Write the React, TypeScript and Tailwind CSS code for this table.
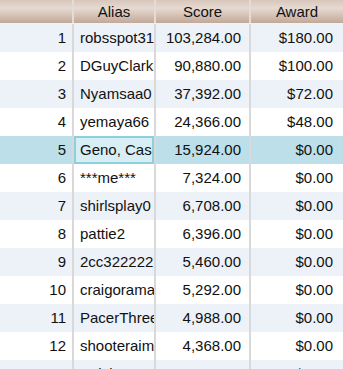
import { type ReactElement } from 'react';

type Row = { rank: number; alias: string; score: string; award: string };

const rows: Row[] = [
  { rank: 1, alias: 'robsspot31', score: '103,284.00', award: '$180.00' },
  { rank: 2, alias: 'DGuyClark', score: '90,880.00', award: '$100.00' },
  { rank: 3, alias: 'Nyamsaa0', score: '37,392.00', award: '$72.00' },
  { rank: 4, alias: 'yemaya66', score: '24,366.00', award: '$48.00' },
  { rank: 5, alias: 'Geno, Casey', score: '15,924.00', award: '$0.00' },
  { rank: 6, alias: '***me***', score: '7,324.00', award: '$0.00' },
  { rank: 7, alias: 'shirlsplay0', score: '6,708.00', award: '$0.00' },
  { rank: 8, alias: 'pattie2', score: '6,396.00', award: '$0.00' },
  { rank: 9, alias: '2cc3222222', score: '5,460.00', award: '$0.00' },
  { rank: 10, alias: 'craigorama', score: '5,292.00', award: '$0.00' },
  { rank: 11, alias: 'PacerThree', score: '4,988.00', award: '$0.00' },
  { rank: 12, alias: 'shooteraim', score: '4,368.00', award: '$0.00' },
  { rank: 13, alias: 'rudyk1234', score: '4,060.00', award: '$0.00' },
];

const SELECTED = 5;

export default function App(): ReactElement {
  return (
    <div
      className="w-[343px] h-[369px] overflow-hidden bg-white text-[15px] text-[#111]"
      style={{ fontFamily: '"Liberation Sans", Arial, sans-serif' }}
    >
      {/* ヘッダー */}
      <div className="grid grid-cols-[74px_82px_95px_92px] h-[24px] border-b border-[#f2f2f2] bg-[linear-gradient(#d8c6ba,#e6dad2_35%,#c2a898)]">
        <div className="border-r-2 border-[#e3dcd7]" />
        <div className="border-r-2 border-[#e3dcd7] flex items-center justify-center leading-none">Alias</div>
        <div className="border-r-2 border-[#e3dcd7] flex items-center justify-center leading-none">Score</div>
        <div className="flex items-center justify-center leading-none">Award</div>
      </div>

      {rows.map((r) => {
        const selected = r.rank === SELECTED;
        const bg = selected ? 'bg-[#bcdfe9]' : r.rank % 2 === 1 ? 'bg-[#edf2f9]' : 'bg-white';
        return (
          <div key={r.rank} className={`grid grid-cols-[74px_82px_95px_92px] h-[28px] ${bg}`}>
            <div className="border-r-2 border-[#d9d9d9] flex items-center justify-end pr-[6px]">{r.rank}</div>
            <div className="border-r-2 border-[#d9d9d9] overflow-hidden">
              <div
                className={
                  selected
                    ? 'h-full flex items-center pl-[4px] whitespace-nowrap overflow-hidden bg-[#d8eef5] border-2 border-[#8ccfdd]'
                    : 'h-full flex items-center pl-[6px] whitespace-nowrap overflow-hidden'
                }
              >
                {r.alias}
              </div>
            </div>
            <div className="border-r-2 border-[#d9d9d9] flex items-center justify-end pr-[8px]">{r.score}</div>
            <div className="flex items-center justify-end pr-[10px]">{r.award}</div>
          </div>
        );
      })}
    </div>
  );
}
